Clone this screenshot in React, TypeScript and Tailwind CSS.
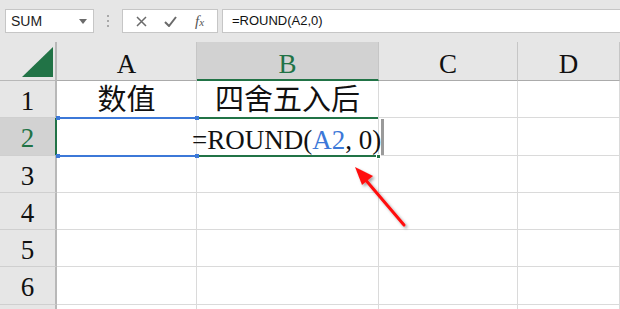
import React from "react";

const serif = { fontFamily: '"Liberation Serif", "Noto Sans CJK SC", serif' };

const cols = ["A", "B", "C", "D"];
const rowHeights = [37, 38, 37, 37, 37, 38, 10];

export default function App() {
  return (
    <div className="relative w-[620px] h-[309px] overflow-hidden bg-[#e6e6e6]">
      {/* Toolbar */}
      <div className="flex h-[42px] items-start pt-[9px] pl-[5px]" style={{ fontFamily: '"Liberation Sans", Arial, sans-serif' }}>
        <div className="flex h-[24px] w-[89px] items-center justify-between border border-[#c6c6c6] bg-white pl-[5px] pr-[6px] text-[14px] text-[#222]">
          <span>SUM</span>
          <svg width="8" height="5" viewBox="0 0 8 5"><path d="M0 0h8L4 5z" fill="#6b6b6b" /></svg>
        </div>
        <div className="flex w-[28px] flex-col items-center justify-center gap-[3px] pt-[6px]">
          <span className="h-[2px] w-[2px] bg-[#a8a8a8]" />
          <span className="h-[2px] w-[2px] bg-[#a8a8a8]" />
          <span className="h-[2px] w-[2px] bg-[#a8a8a8]" />
        </div>
        <div className="flex h-[24px] w-[96px] items-center justify-around border border-[#c6c6c6] bg-white px-[4px]">
          <svg width="11" height="11" viewBox="0 0 11 11"><path d="M1 1l9 9M10 1l-9 9" stroke="#6a6a6a" strokeWidth="1.5" /></svg>
          <svg width="13" height="11" viewBox="0 0 13 11"><path d="M1 6l4 4 7-9" stroke="#6a6a6a" strokeWidth="2" fill="none" /></svg>
          <span className="text-[15px] italic text-[#555]" style={{ fontFamily: '"Liberation Serif", serif' }}>f<span className="text-[11px]">x</span></span>
        </div>
        <div className="ml-[4px] flex h-[24px] flex-1 items-center border border-r-0 border-[#c6c6c6] bg-white pl-[9px] text-[13px] text-[#111]">
          =ROUND(A2,0)
        </div>
      </div>

      {/* Grid */}
      <div className="grid" style={{ gridTemplateColumns: "57px 140px 182px 139px 102px" }}>
        {/* header row */}
        <div className="relative h-[39px] border-r-2 border-b border-[#b8b8b8] bg-[#e6e6e6]">
          <svg className="absolute left-[22px] top-[5px]" width="31" height="30" viewBox="0 0 31 30"><path d="M0 30L31 0V30z" fill="#217346" /></svg>
        </div>
        {cols.map((c) => {
          const sel = c === "B";
          return (
            <div
              key={c}
              className={
                sel
                  ? "flex h-[39px] items-center justify-center border-r border-b-2 border-r-[#c6c6c6] border-b-[#217346] bg-[#d2d2d2] pt-[7px] text-[27px] text-[#217346]"
                  : "flex h-[39px] items-center justify-center border-r border-b border-[#c6c6c6] border-b-[#ababab] bg-[#e6e6e6] pt-[6px] text-[27px] text-[#111]"
              }
              style={serif}
            >
              {c}
            </div>
          );
        })}
        {rowHeights.map((h, i) => {
          const r = i + 1;
          const selRow = r === 2;
          return (
            <React.Fragment key={r}>
              <div
                className={
                  selRow
                    ? "flex items-center justify-center border-r-2 border-b border-r-[#217346] border-b-[#cfcfcf] bg-[#d2d2d2] pt-[4px] text-[27px] text-[#217346]"
                    : "flex items-center justify-center border-r-2 border-b border-r-[#b8b8b8] border-b-[#cfcfcf] bg-[#e6e6e6] pt-[4px] text-[27px] text-[#111]"
                }
                style={{ ...serif, height: h }}
              >
                {r <= 6 ? r : ""}
              </div>
              {cols.map((c) => (
                <div
                  key={c}
                  className="flex items-center justify-center border-r border-b border-[#dadada] bg-white pt-[3px] text-[29px] leading-none text-[#111]"
                  style={{ ...serif, height: h }}
                >
                  {r === 1 && c === "A" ? "数值" : r === 1 && c === "B" ? "四舍五入后" : ""}
                </div>
              ))}
            </React.Fragment>
          );
        })}
      </div>

      {/* A2 reference highlight (blue) */}
      <div className="absolute left-[58px] top-[117px] h-[40px] w-[140px] border-y-2 border-[#3c78d8]" />
      <div className="absolute left-[195px] top-[116px] h-[4px] w-[4px] bg-[#3c78d8]" />
      <div className="absolute left-[195px] top-[154px] h-[4px] w-[4px] bg-[#3c78d8]" />
      <div className="absolute left-[56px] top-[116px] h-[4px] w-[4px] bg-[#3c78d8]" />
      <div className="absolute left-[56px] top-[154px] h-[4px] w-[4px] bg-[#3c78d8]" />

      {/* B2 edit box (green) */}
      <div className="absolute left-[199px] top-[117px] h-[40px] w-[179px] border-y-2 border-[#217346]" />
      <div className="absolute left-[376px] top-[154px] h-[5px] w-[5px] border border-white bg-[#217346]" />
      <div className="absolute left-[381px] top-[119px] h-[36px] w-[3px] bg-[#9a9a9a]" />

      {/* formula text in cell */}
      <div
        className="absolute left-[192px] top-[123px] h-[34px] whitespace-nowrap bg-transparent text-[27px] leading-[34px] text-[#111]"
        style={serif}
      >
        =ROUND(<span className="text-[#3c78d8]">A2</span>, 0)
      </div>

      {/* red arrow */}
      <svg className="absolute left-0 top-0" width="620" height="309" viewBox="0 0 620 309">
        <defs>
          <filter id="sh" x="-50%" y="-50%" width="200%" height="200%">
            <feDropShadow dx="2" dy="2" stdDeviation="1.5" floodColor="#000" floodOpacity="0.35" />
          </filter>
        </defs>
        <g filter="url(#sh)">
          <line x1="404" y1="225" x2="364" y2="178" stroke="#ff1010" strokeWidth="3" strokeLinecap="round" />
          <path d="M355 167L373 176L362 185z" fill="#ff1010" />
        </g>
      </svg>
    </div>
  );
}
